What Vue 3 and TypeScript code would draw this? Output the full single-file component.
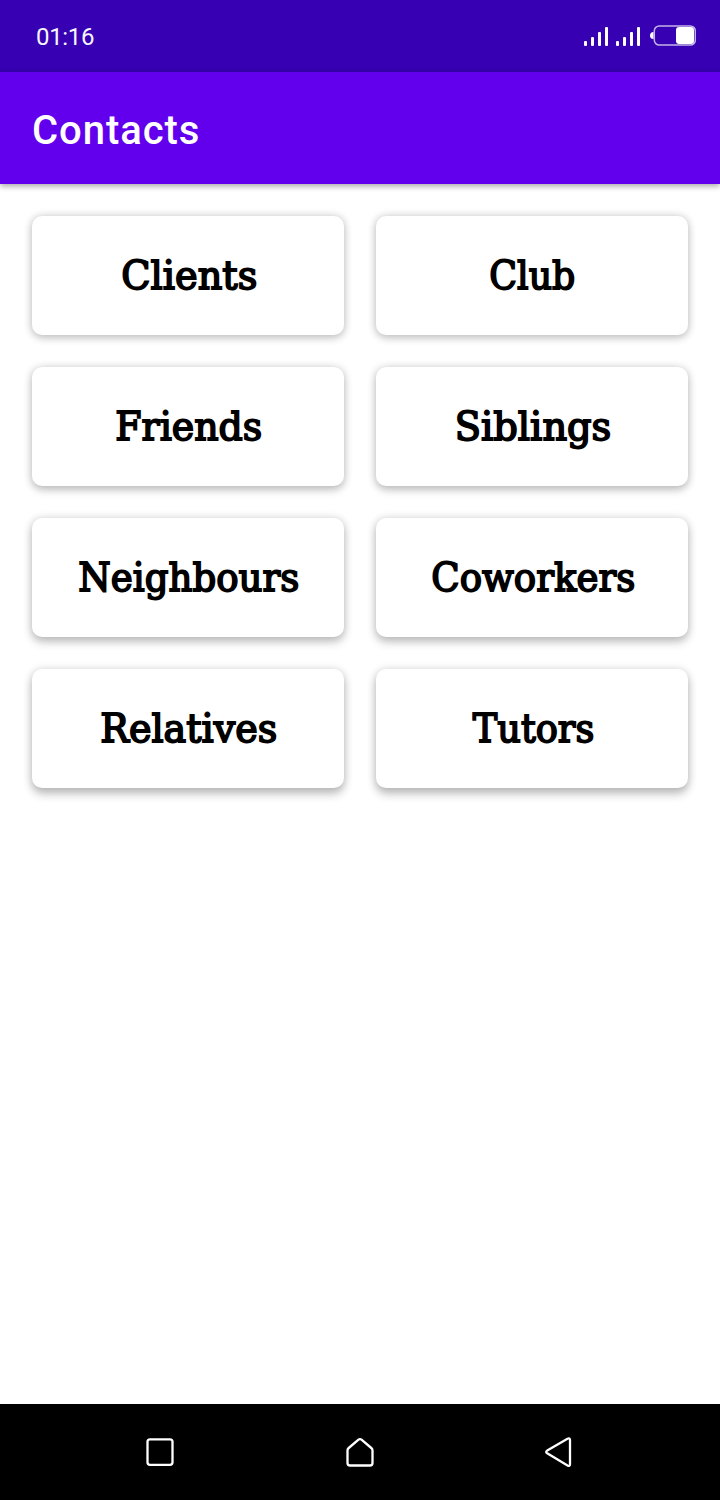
<script setup lang="ts">
interface Group {
  name: string
  start: number
  width: number
}

// Label start and advance are relative to the card's left edge.
const rows: Group[][] = [
  [{ name: 'Clients', start: 89.3, width: 136 }, { name: 'Club', start: 113.3, width: 86 }],
  [{ name: 'Friends', start: 83.3, width: 147 }, { name: 'Siblings', start: 78.8, width: 156.5 }],
  [{ name: 'Neighbours', start: 46.3, width: 221 }, { name: 'Coworkers', start: 55.3, width: 204 }],
  [{ name: 'Relatives', start: 68.3, width: 177 }, { name: 'Tutors', start: 96.8, width: 121.5 }],
]

// The light source sits at the top of the screen, so lower cards cast deeper shadows.
const shadowFor = (row: number) =>
  `0 ${2.5 + row * 1.1}px ${8 + row * 0.6}px rgba(0,0,0,${0.2 + row * 0.015}), 0 0 10px rgba(0,0,0,0.12)`
</script>

<template>
  <div class="screen">
    <header class="status">
      <span class="clock">01:16</span>
      <svg class="indicators" width="114" height="24" viewBox="0 0 114 24">
        <g fill="#fff">
          <rect x="2" y="17" width="3" height="5" rx="1" />
          <rect x="9" y="13" width="3" height="9" rx="1" />
          <rect x="16" y="8" width="3" height="14" rx="1" />
          <rect x="23" y="3" width="3" height="19" rx="1" />
          <rect x="34" y="17" width="3" height="5" rx="1" />
          <rect x="41" y="13" width="3" height="9" rx="1" />
          <rect x="48" y="8" width="3" height="14" rx="1" />
          <rect x="55" y="3" width="3" height="19" rx="1" />
          <path d="M71.500 8Q68 8 68 11.500T71.500 15Z" />
          <rect x="94" y="3" width="18" height="17" rx="3" />
        </g>
        <rect x="72.300" y="1.900" width="41" height="19.200" rx="5" fill="none" stroke="#fff" stroke-opacity=".7" stroke-width="1.500" />
      </svg>
    </header>
    <div class="appbar"><h1>Contacts</h1></div>
    <main class="content">
      <div v-for="(row, r) in rows" :key="r" class="row">
        <div v-for="g in row" :key="g.name" class="card" :style="{ boxShadow: shadowFor(r) }">
          <svg width="312" height="119" viewBox="0 0 312 119">
            <text class="label" :x="g.start" y="73.300" :textLength="g.width" lengthAdjust="spacingAndGlyphs">{{ g.name }}</text>
          </svg>
        </div>
      </div>
    </main>
    <nav class="navbar">
      <svg width="40" height="40" viewBox="0 0 40 40"><rect x="7.500" y="7.300" width="25" height="25.500" rx="2.500" /></svg>
      <svg width="40" height="40" viewBox="0 0 40 40"><path d="M18.500 7.700Q20 6.500 21.500 7.700L31.300 16Q32.500 17 32.500 18.500V31Q32.500 33.500 30 33.500H10Q7.500 33.500 7.500 31V18.500Q7.500 17 8.700 16Z" /></svg>
      <svg width="40" height="40" viewBox="0 0 40 40"><path d="M7.200 18.600L27.500 6.700Q30 5.500 30 8V32.200Q30 34.700 27.500 33.500L7.200 21.200Q5.200 19.900 7.200 18.600Z" /></svg>
    </nav>
  </div>
</template>

<style>
body {
  margin: 0;
  background: #fff;
}
</style>

<style scoped>
.screen {
  width: 720px;
  height: 1500px;
  display: flex;
  flex-direction: column;
  background: #fff;
  font-family: Roboto, sans-serif;
}
.status {
  height: 72px;
  box-sizing: border-box;
  padding: 0 24px 0 36px;
  display: flex;
  align-items: center;
  justify-content: space-between;
  background: #3700b3;
  color: #fff;
}
.clock {
  font-size: 24px;
  line-height: 28px;
  letter-spacing: -0.35px;
  padding-top: 2px;
  color: #f8f5fd;
}
.indicators {
  display: block;
}
.appbar {
  height: 112px;
  box-sizing: border-box;
  padding: 6px 32px 0;
  display: flex;
  align-items: center;
  background: #6200ee;
  box-shadow: 0 2px 6px rgba(0, 0, 0, 0.36);
}
h1 {
  margin: 0;
  color: #fff;
  font-size: 40px;
  line-height: 48px;
  font-weight: 500;
  letter-spacing: 0.95px;
}
.content {
  flex: 1;
  padding: 32px;
  display: flex;
  flex-direction: column;
  gap: 32px;
}
.row {
  display: grid;
  grid-template-columns: 1fr 1fr;
  gap: 32px;
}
.card {
  height: 119px;
  border-radius: 10px;
  background: #fff;
}
.card svg {
  display: block;
}
.label {
  font-family: "DejaVu Serif", serif;
  font-size: 39.5px;
  fill: #000;
  stroke: #000;
  stroke-width: 1.8px;
}
.navbar {
  height: 96px;
  box-sizing: border-box;
  padding: 0 140px;
  display: flex;
  align-items: center;
  justify-content: space-between;
  background: #000;
}
.navbar svg {
  fill: none;
  stroke: #fff;
  stroke-width: 2.3px;
}
</style>
